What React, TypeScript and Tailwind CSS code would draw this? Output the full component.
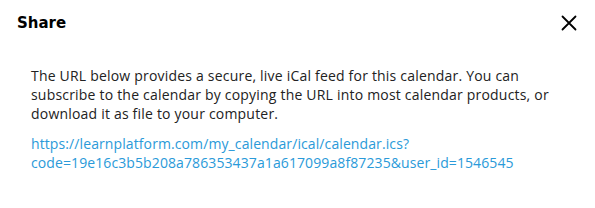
const App = () => {
  return (
    <div className="w-[595px] h-[208px] bg-white font-['Open_Sans',sans-serif] text-[#222]">
      {/* Header */}
      <div className="h-[46px] flex items-center justify-between pl-[17px] pr-[16px]">
        <h2 className="font-['DejaVu_Sans',sans-serif] text-[15px] font-bold text-black">Share</h2>
        <button className="w-5 h-5 flex items-center justify-center text-black">
          <svg width="16" height="16" viewBox="0 0 16 16" fill="none" stroke="currentColor" strokeWidth="1.8" strokeLinecap="round">
            <path d="M1.5 1.5L14.5 14.5M14.5 1.5L1.5 14.5" />
          </svg>
        </button>
      </div>

      {/* Body */}
      <div className="px-[31px] pt-5 text-[14px] leading-[19px]">
        <p className="tracking-[0.2px]">
          The URL below provides a secure, live iCal feed for this calendar. You can subscribe to the calendar by copying
          the URL into most calendar products, or download it as file to your computer.
        </p>
        <a href="#" className="block mt-[11px] leading-[19px] tracking-[0.1px] text-[#2a9ad9]">
          https://learnplatform.com/my_calendar/ical/calendar.ics?
          <br />
          code=19e16c3b5b208a786353437a1a617099a8f87235&amp;user_id=1546545
        </a>
      </div>
    </div>
  );
};

export default App;
